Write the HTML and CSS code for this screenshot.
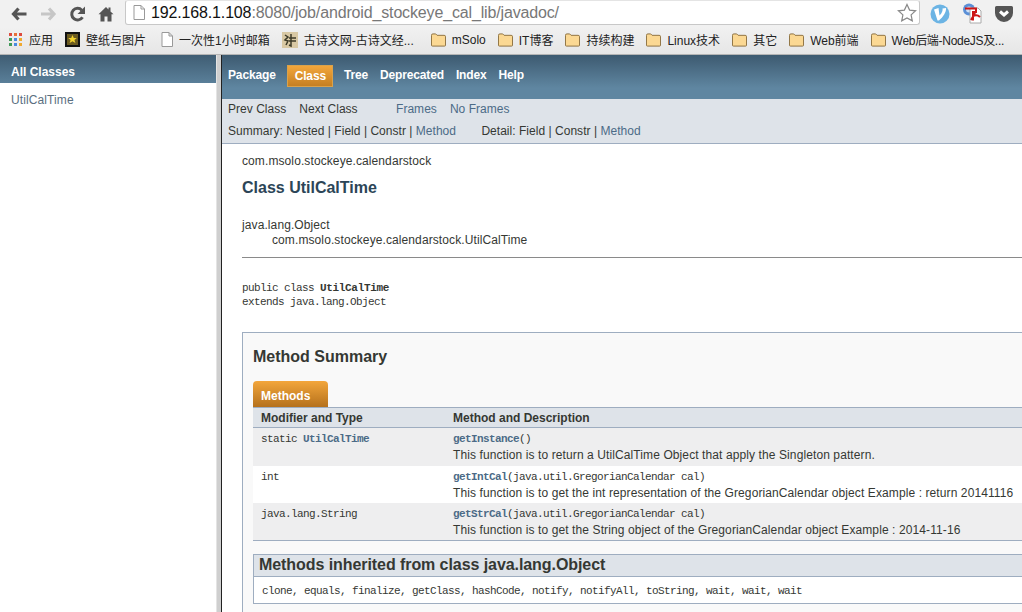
FILE: index.html
```html
<!DOCTYPE html>
<html>
    <head>
        <meta charset="utf-8">
        <meta name="viewport" content="width=device-width, initial-scale=1">
        <title>UtilCalTime</title>
        <link rel="stylesheet" href="styles.css">
    </head>
    <body>
        <div class="toolbar">
            <svg class="tool" width="18" height="16" viewBox="0 0 18 16"><path d="M8.500 2.500 3.500 8l5 5.500M4 8h12.500" fill="none" stroke="#555" stroke-width="3.200"/></svg>
            <svg class="tool" width="18" height="16" viewBox="0 0 18 16"><path d="M10 2.500 15 8l-5 5.500M14.500 8H2" fill="none" stroke="#c6c6c6" stroke-width="3.200"/></svg>
            <svg class="tool" width="18" height="16" viewBox="0 0 18 16"><path d="M14.500 11.200A5.800 5.800 0 1 1 13.800 4.200" fill="none" stroke="#555" stroke-width="3"/><path d="M17 .5v7.500H9.500z" fill="#555"/></svg>
            <svg class="tool" width="18" height="16" viewBox="0 0 18 16"><path d="M9 1 1.500 8.300h2V15.500H7.500V10.500h3v5h4V8.300h2L13.500 5.500V1.500h-2v2z" fill="#555"/></svg>
            <div class="omnibox">
                <svg width="12" height="15" viewBox="0 0 12 15"><path d="M1 .5h7l3.500 3.500v10.500H1zM8 .5V4h3.500" fill="#fff" stroke="#999"/></svg>
                <span class="url">192.168.1.108<span class="url-rest">:8080/job/android_stockeye_cal_lib/javadoc/</span></span>
                <svg class="star" width="20" height="19" viewBox="0 0 20 19"><path d="M10 1.500l2.600 5.600 6 .7-4.500 4.100 1.200 6L10 15l-5.300 2.900 1.200-6L1.400 7.800l6-.7z" fill="#fff" stroke="#888" stroke-width="1.200"/></svg>
            </div>
            <svg class="ext" width="20" height="20" viewBox="0 0 20 20"><circle cx="10" cy="10" r="9.500" fill="#6cb4e4"/><path d="M4 5.500 8.500 4l1 7.500C12 9 13 6.500 12.500 4.500L16 4c.5 4-3 9-7 12.500H7.500z" fill="#fff"/></svg>
            <svg class="ext" width="20" height="21" viewBox="0 0 20 21"><circle cx="7" cy="6.500" r="6" fill="#5b8fd6"/><circle cx="7" cy="6.500" r="3" fill="#cfe0f5"/><path d="M8 5h8l3 3v12H8z" fill="#fff" stroke="#aaa"/><path d="M3 5.500h11V9H11V17.500M9 17c2-4 4-6 4-8M11 13c2-1 5-1 7 1" fill="none" stroke="#cc1616" stroke-width="2"/></svg>
            <svg class="ext" width="20" height="18" viewBox="0 0 20 18"><path d="M2.500 1h15A1.500 1.500 0 0 1 19 2.500V8a9 9 0 0 1-18 0V2.500A1.500 1.500 0 0 1 2.500 1z" fill="#555"/><path d="M6 6.500l4 3.500 4-3.500" fill="none" stroke="#fff" stroke-width="3"/></svg>
        </div>
        <div class="bookmarks">
            <div class="mark mark-apps">
                <svg width="13" height="13" viewBox="0 0 13 13"><path d="M0 0h3v3H0z" fill="#dd4b3e"/><path d="M5 0h3v3H5z" fill="#e8703a"/><path d="M10 0h3v3h-3z" fill="#dd4b3e"/><path d="M0 5h3v3H0z" fill="#3f9a58"/><path d="M5 5h3v3H5z" fill="#4a8ae0"/><path d="M10 5h3v3h-3z" fill="#f0a92e"/><path d="M0 10h3v3H0z" fill="#3f9a58"/><path d="M5 10h3v3H5z" fill="#4a8ae0"/><path d="M10 10h3v3h-3z" fill="#f0a92e"/></svg>
                应用
            </div>
            <div class="mark mark-wide">
                <svg width="15" height="15" viewBox="0 0 15 15"><path d="M0 0h15v15H0z" fill="#111"/><path d="M2 2h11v11H2z" fill="#6a5a20"/><path d="M7.500 3l1.300 3h3l-2.400 2 1 3-2.900-1.800L4.600 11l1-3-2.400-2h3z" fill="#f2d22e"/></svg>
                壁纸与图片
            </div>
            <div class="mark">
                <svg width="12" height="15" viewBox="0 0 12 15"><path d="M1 .5h7l3.500 3.500v10.500H1zM8 .5V4h3.500" fill="#fff" stroke="#999"/></svg>
                一次性1小时邮箱
            </div>
            <div class="mark mark-wider">
                <svg width="16" height="16" viewBox="0 0 16 16"><path d="M0 0h16v16H0z" fill="#d8c8a4"/><path d="M3 3l3 2-3 3 3 1-2 4M9 2v12l-2-1M7 6h7M7 9h7" fill="none" stroke="#3c3a28" stroke-width="1.500"/></svg>
                古诗文网-古诗文经...
            </div>
            <div class="mark"><svg width="15" height="14" viewBox="0 0 16 14"><use href="#fold"/></svg>mSolo</div>
            <div class="mark"><svg width="15" height="14" viewBox="0 0 16 14"><use href="#fold"/></svg>IT博客</div>
            <div class="mark"><svg width="15" height="14" viewBox="0 0 16 14"><use href="#fold"/></svg>持续构建</div>
            <div class="mark"><svg width="15" height="14" viewBox="0 0 16 14"><use href="#fold"/></svg>Linux技术</div>
            <div class="mark"><svg width="15" height="14" viewBox="0 0 16 14"><use href="#fold"/></svg>其它</div>
            <div class="mark"><svg width="15" height="14" viewBox="0 0 16 14"><use href="#fold"/></svg>Web前端</div>
            <div class="mark mark-tight"><svg width="15" height="14" viewBox="0 0 16 14"><use href="#fold"/></svg>Web后端-NodeJS及...</div>
        </div>
        <svg class="defs" width="0" height="0"><defs><g id="fold"><path d="M1.500 13.500a1 1 0 0 1-1-1V2a1.500 1.500 0 0 1 1.500-1.500h3l1.500 1.500h7.500a1.500 1.500 0 0 1 1.500 1.500v9a1 1 0 0 1-1 1z" fill="#fbd893" stroke="#8a6d3c"/></g></defs></svg>

        <div class="frames">
            <div class="left-frame">
                <div class="all-classes">All Classes</div>
                <div class="class-link">UtilCalTime</div>
            </div>
            <div class="splitter"></div>
            <div class="main-frame">
                <div class="topnav">
                    <span>Package</span>
                    <span class="current">Class</span>
                    <span>Tree</span>
                    <span>Deprecated</span>
                    <span>Index</span>
                    <span>Help</span>
                </div>
                <div class="subnav">
                    <div class="sub-row">
                        <span>Prev Class</span><span class="gap13">Next Class</span>
                        <span class="muted gap35">Frames</span><span class="muted gap13">No Frames</span>
                    </div>
                    <div class="sub-row">
                        <span>Summary: Nested | Field | Constr | <span class="muted">Method</span></span>
                        <span class="gap22">Detail: Field | Constr | <span class="muted">Method</span></span>
                    </div>
                </div>
                <div class="content">
                    <div class="pkg">com.msolo.stockeye.calendarstock</div>
                    <h2 class="title">Class UtilCalTime</h2>
                    <div class="inherit">
                        <div>java.lang.Object</div>
                        <div class="inherit-child">com.msolo.stockeye.calendarstock.UtilCalTime</div>
                    </div>
                    <pre class="decl">public class <b>UtilCalTime</b>
extends java.lang.Object</pre>
                    <div class="summary">
                        <h3 class="summary-title">Method Summary</h3>
                        <div class="tab">Methods</div>
                        <div class="method-table">
                            <div class="row head">
                                <div class="col-type">Modifier and Type</div>
                                <div>Method and Description</div>
                            </div>
                            <div class="row alt">
                                <div class="col-type code">static <a>UtilCalTime</a></div>
                                <div>
                                    <div class="code"><a>getInstance</a>()</div>
                                    <div class="desc">This function is to return a UtilCalTime Object that apply the Singleton pattern.</div>
                                </div>
                            </div>
                            <div class="row">
                                <div class="col-type code">int</div>
                                <div>
                                    <div class="code"><a>getIntCal</a>(java.util.GregorianCalendar cal)</div>
                                    <div class="desc">This function is to get the int representation of the GregorianCalendar object Example : return 20141116</div>
                                </div>
                            </div>
                            <div class="row alt">
                                <div class="col-type code">java.lang.String</div>
                                <div>
                                    <div class="code"><a>getStrCal</a>(java.util.GregorianCalendar cal)</div>
                                    <div class="desc">This function is to get the String object of the GregorianCalendar object Example : 2014-11-16</div>
                                </div>
                            </div>
                        </div>
                        <div class="inherited">
                            <h3 class="inherited-title">Methods inherited from class java.lang.Object</h3>
                            <div class="inherited-list">clone, equals, finalize, getClass, hashCode, notify, notifyAll, toString, wait, wait, wait</div>
                        </div>
                    </div>
                </div>
            </div>
        </div>
    </body>
</html>
```

FILE: styles.css
```css
*, ::after, ::before {
    box-sizing: border-box;
}
html, body {
    height: 100%;
}
body {
    margin: 0;
    overflow: hidden;
    display: flex;
    flex-direction: column;
    font-family: "Liberation Sans", "Noto Sans CJK SC", sans-serif;
    font-size: 12px;
    color: #353833;
    background: #fff;
}
.defs {
    display: block;
    height: 0;
}

/* browser chrome */
.toolbar {
    height: 27px;
    display: flex;
    align-items: center;
    padding: 0 0 0 10px;
    background: #f1f1f1;
}
.tool {
    margin-right: 11px;
}
.omnibox {
    width: 795px;
    height: 25px;
    margin: 0 -2px 0 -1px;
    align-self: flex-start;
    display: flex;
    align-items: center;
    padding: 0 2px 0 7px;
    background: #fff;
    border: 1px solid #c8c8c8;
    border-top-color: #e4e4e4;
    border-radius: 3px;
}
.url {
    margin-left: 6px;
    font-size: 16px;
    letter-spacing: -0.15px;
    color: #111;
    flex: 1;
}
.url-rest {
    color: #777;
}
.ext {
    margin-left: 12px;
}
.bookmarks {
    height: 28px;
    display: flex;
    align-items: center;
    padding: 0 0 2px 9px;
    gap: 12px;
    background: linear-gradient(#f1f1f1, #e6e6e6);
    border-bottom: 1px solid #b4b4b4;
    white-space: nowrap;
}
.mark {
    display: flex;
    align-items: center;
    gap: 6px;
    color: #222;
}
.mark-apps {
    gap: 7px;
}
.mark-wide {
    margin-right: 3px;
}
.mark-wider {
    margin-right: 5px;
}
.mark-tight {
    letter-spacing: -0.3px;
}

/* frames */
.frames {
    flex: 1;
    display: flex;
    min-height: 0;
    letter-spacing: 0.1px;
}
.left-frame {
    width: 216px;
}
.all-classes {
    height: 28px;
    padding: 10px 0 0 11px;
    font-weight: bold;
    letter-spacing: 0;
    color: #fff;
    background: linear-gradient(#3f5d73, #5a7f99);
}
.class-link {
    padding: 10px 0 0 11px;
    color: #5a6f7f;
}
.splitter {
    width: 6px;
    background: #cfcfcf;
    border-left: 1px solid #e4e4e4;
    border-right: 1px solid #222;
}
.main-frame {
    flex: 1;
    min-width: 0;
}
.topnav {
    height: 44px;
    padding: 10px 0 0 6px;
    display: flex;
    gap: 12px;
    align-items: flex-start;
    line-height: 20px;
    color: #fff;
    font-weight: bold;
    letter-spacing: -0.15px;
    background: linear-gradient(#3d5a70 0, #5f86a1 75%, #5f86a1 100%);
}
.topnav .current {
    padding: 0 6px 0 7px;
    margin: 0 -1px;
    height: 22px;
    background: linear-gradient(#f3a63b, #c57f22);
    border: 1px solid #d9a24c;
}
.subnav {
    height: 45px;
    padding: 1px 0 0 6px;
    letter-spacing: 0.03px;
    background: #dee3e9;
    border-bottom: 1px solid #9eadc0;
}
.sub-row {
    height: 22px;
    line-height: 19px;
    white-space: nowrap;
}
.muted {
    color: #4c6b87;
}
.gap13 {
    margin-left: 13px;
}
.gap22 {
    margin-left: 22px;
}
.gap35 {
    margin-left: 35px;
}
.content {
    padding: 10px 0 0 20px;
}
.pkg {
    line-height: 14px;
}
.title {
    margin: 10px 0 0;
    font-size: 16px;
    letter-spacing: 0;
    line-height: 20px;
    color: #2c4557;
}
.inherit {
    margin-top: 20px;
    line-height: 15px;
    padding-bottom: 9px;
    border-bottom: 1px solid #8a8a8a;
}
.inherit-child {
    padding-left: 30px;
}
.decl {
    margin: 23px 0 0;
    font-family: "Liberation Mono", monospace;
    font-size: 11px;
    letter-spacing: -0.6px;
    line-height: 14px;
}
.decl b {
    letter-spacing: -0.33px;
}
.summary {
    width: 800px;
    margin-top: 23px;
    padding: 0 0 0 10px;
    height: 300px;
    background: #f9f9f9;
    border: 1px solid #9eadc0;
}
.summary-title {
    margin: 14px 0 0;
    font-size: 16px;
    letter-spacing: 0;
    line-height: 20px;
    color: #353833;
}
.tab {
    width: 75px;
    height: 26px;
    margin-top: 14px;
    padding: 8px 0 0 8px;
    font-weight: bold;
    letter-spacing: 0;
    color: #fff;
    background: linear-gradient(#f3a63b, #b5711c);
    border-radius: 4px 4px 0 0;
}
.method-table {
    border-bottom: 1px solid #9eadc0;
}
.row {
    display: flex;
    height: 37px;
    padding: 3px 0 0 8px;
    background: #fff;
}
.row.alt {
    background: #eeeeef;
}
.head + .row {
    height: 38px;
}
.row.head {
    height: 21px;
    padding-top: 3px;
    font-weight: bold;
    letter-spacing: 0;
    background: #dee3e9;
    border-top: 1px solid #9eadc0;
    border-bottom: 1px solid #9eadc0;
}
.col-type {
    width: 192px;
}
.code {
    font-family: "Liberation Mono", monospace;
    font-size: 11px;
    letter-spacing: -0.6px;
    line-height: 16px;
}
.code a {
    font-weight: bold;
    color: #4c6b87;
}
.desc {
    line-height: 16px;
    white-space: nowrap;
}
.inherited {
    margin-top: 13px;
    border: 1px solid #9eadc0;
}
.inherited-title {
    margin: 0;
    height: 22px;
    padding: 0 0 0 5px;
    font-size: 16px;
    letter-spacing: -0.07px;
    line-height: 20px;
    background: #dee3e9;
    border-bottom: 1px solid #9eadc0;
}
.inherited-list {
    height: 26px;
    padding: 7px 0 0 8px;
    font-family: "Liberation Mono", monospace;
    font-size: 11px;
    letter-spacing: -0.6px;
    line-height: 14px;
    background: #fff;
}
```
